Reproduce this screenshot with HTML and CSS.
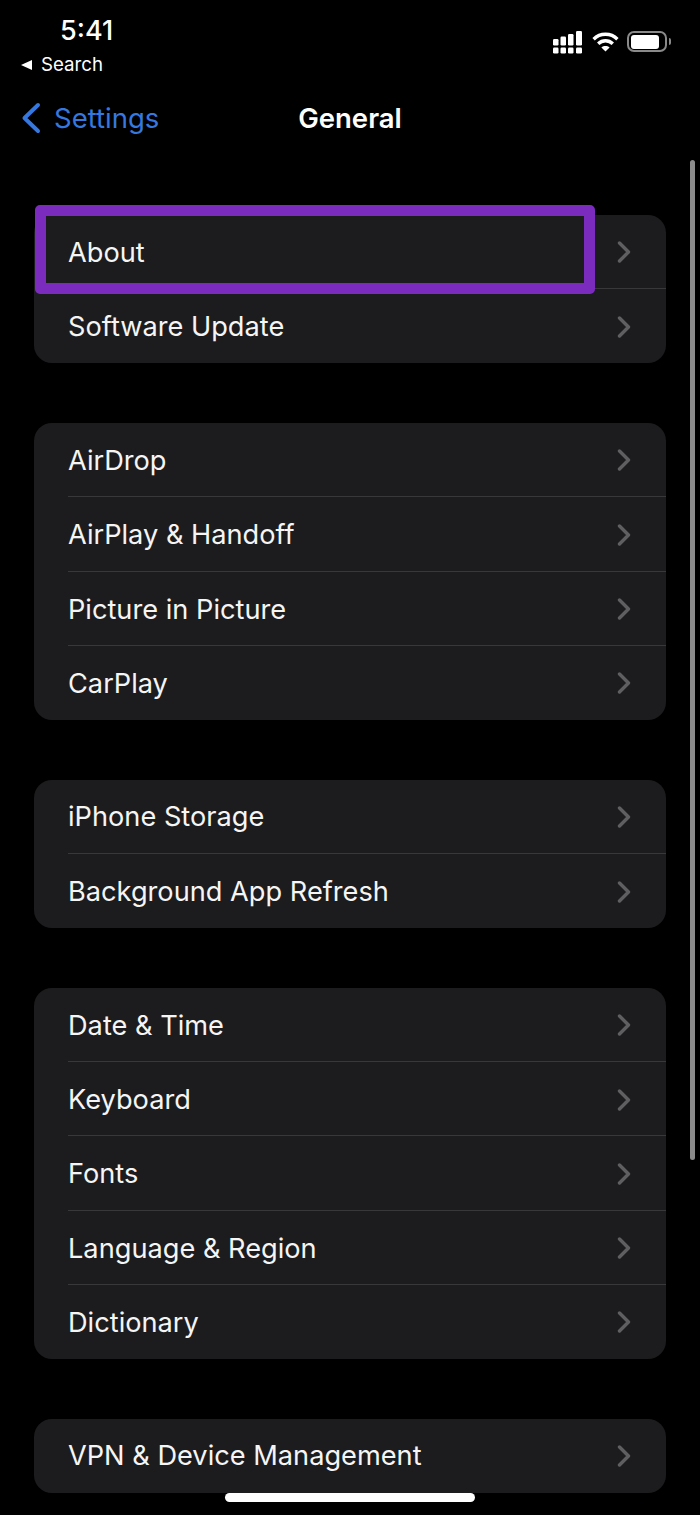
FILE: index.html
```html
<!doctype html>
<html>
<head>
    <title>General</title>
    <link rel="stylesheet" href="styles.css">
</head>

<body>
<div class="phone">
    <div class="status">
        <div class="status-left">
            <div class="time">5:41</div>
            <div class="back-app"><span class="back-tri"></span>Search</div>
        </div>
        <div class="status-icons">
            <svg class="signal" width="30" height="23" viewBox="0 0 30 23" fill="#fff">
                <rect x="0" y="8" width="5.5" height="6.5" rx="1.2"/>
                <rect x="7.5" y="5.5" width="5.5" height="9" rx="1.2"/>
                <rect x="15" y="3" width="5.5" height="11.5" rx="1.2"/>
                <rect x="23" y="0" width="6" height="14.5" rx="1.2"/>
                <rect x="0" y="16.5" width="5.5" height="6" rx="1.2"/>
                <rect x="7.5" y="16.5" width="5.5" height="6" rx="1.2"/>
                <rect x="15" y="16.5" width="5.5" height="6" rx="1.2"/>
                <rect x="23" y="16.5" width="6" height="6" rx="1.2"/>
            </svg>
            <svg class="wifi" width="27" height="20" viewBox="0 0 27 20" fill="none" stroke="#fff" stroke-width="3.4">
                <path d="M1.6 7.2C8.2 0.6 18.8 0.6 25.4 7.2"/>
                <path d="M6.2 11.8C10.4 7.8 16.6 7.8 20.8 11.8"/>
                <path d="M13.5 19.6L9.4 15.5C11.8 13.6 15.2 13.6 17.6 15.5Z" fill="#fff" stroke="none"/>
            </svg>
            <div class="battery"><div class="battery-fill"></div></div>
            <div class="battery-nub"></div>
        </div>
    </div>

    <div class="nav">
        <div class="nav-back">
            <svg width="20" height="32" viewBox="0 0 20 32" fill="none" stroke="#3478e0" stroke-width="4" stroke-linecap="round" stroke-linejoin="round">
                <path d="M17 3L3.5 16L17 29"/>
            </svg>
            <span>Settings</span>
        </div>
        <div class="nav-title">General</div>
    </div>

    <div class="list">
        <div class="group">
            <div class="row"><span>About</span><svg class="chev" width="14" height="22" viewBox="0 0 14 22"><path d="M2.5 2L11.5 11L2.5 20"/></svg></div>
            <div class="row"><span>Software Update</span><svg class="chev" width="14" height="22" viewBox="0 0 14 22"><path d="M2.5 2L11.5 11L2.5 20"/></svg></div>
        </div>
        <div class="group">
            <div class="row"><span>AirDrop</span><svg class="chev" width="14" height="22" viewBox="0 0 14 22"><path d="M2.5 2L11.5 11L2.5 20"/></svg></div>
            <div class="row"><span>AirPlay &amp; Handoff</span><svg class="chev" width="14" height="22" viewBox="0 0 14 22"><path d="M2.5 2L11.5 11L2.5 20"/></svg></div>
            <div class="row"><span>Picture in Picture</span><svg class="chev" width="14" height="22" viewBox="0 0 14 22"><path d="M2.5 2L11.5 11L2.5 20"/></svg></div>
            <div class="row"><span>CarPlay</span><svg class="chev" width="14" height="22" viewBox="0 0 14 22"><path d="M2.5 2L11.5 11L2.5 20"/></svg></div>
        </div>
        <div class="group">
            <div class="row"><span>iPhone Storage</span><svg class="chev" width="14" height="22" viewBox="0 0 14 22"><path d="M2.5 2L11.5 11L2.5 20"/></svg></div>
            <div class="row"><span>Background App Refresh</span><svg class="chev" width="14" height="22" viewBox="0 0 14 22"><path d="M2.5 2L11.5 11L2.5 20"/></svg></div>
        </div>
        <div class="group">
            <div class="row"><span>Date &amp; Time</span><svg class="chev" width="14" height="22" viewBox="0 0 14 22"><path d="M2.5 2L11.5 11L2.5 20"/></svg></div>
            <div class="row"><span>Keyboard</span><svg class="chev" width="14" height="22" viewBox="0 0 14 22"><path d="M2.5 2L11.5 11L2.5 20"/></svg></div>
            <div class="row"><span>Fonts</span><svg class="chev" width="14" height="22" viewBox="0 0 14 22"><path d="M2.5 2L11.5 11L2.5 20"/></svg></div>
            <div class="row"><span>Language &amp; Region</span><svg class="chev" width="14" height="22" viewBox="0 0 14 22"><path d="M2.5 2L11.5 11L2.5 20"/></svg></div>
            <div class="row"><span>Dictionary</span><svg class="chev" width="14" height="22" viewBox="0 0 14 22"><path d="M2.5 2L11.5 11L2.5 20"/></svg></div>
        </div>
        <div class="group">
            <div class="row"><span>VPN &amp; Device Management</span><svg class="chev" width="14" height="22" viewBox="0 0 14 22"><path d="M2.5 2L11.5 11L2.5 20"/></svg></div>
        </div>
    </div>

    <!-- overlays -->
    <div class="highlight"></div>
    <div class="scrollbar"></div>
    <div class="home-bar"></div>
</div>
</body>
</html>
```

FILE: styles.css
```css
body {
    background: #000;
    color: #fff;
    margin: 0;
    font-family: Inter, "Noto Sans", sans-serif;
}

.phone {
    position: relative;
    width: 700px;
    height: 1515px;
    overflow: hidden;
    background: #000;
}

.status {
    height: 84px;
    display: flex;
    justify-content: space-between;
    padding: 0 29px 0 21px;
}

.status-left {
    padding-top: 16px;
}

.time {
    font-size: 27px;
    font-weight: 500;
    line-height: 30px;
    margin-left: 39px;
}

.back-app {
    display: flex;
    align-items: center;
    font-size: 18.7px;
    line-height: 24px;
    margin-top: 7px;
}

.back-tri {
    width: 0;
    height: 0;
    border-style: solid;
    border-width: 5.5px 11px 5.5px 0;
    border-color: transparent #fff transparent transparent;
    margin-right: 9px;
}

.status-icons {
    display: flex;
    align-items: flex-start;
    padding-top: 31px;
}

.wifi {
    margin: 1px 0 0 9px;
}

.battery {
    width: 40px;
    height: 21px;
    margin-left: 8px;
    padding: 1.5px;
    border: 2px solid #8a8a8a;
    border-radius: 7px;
    box-sizing: border-box;
}

.battery-fill {
    width: 28px;
    height: 100%;
    background: #fff;
    border-radius: 3px;
}

.battery-nub {
    width: 2px;
    height: 7px;
    margin: 7px 0 0 2px;
    background: #8a8a8a;
    border-radius: 0 2px 2px 0;
}

.nav {
    height: 68px;
    position: relative;
    display: flex;
    align-items: center;
    justify-content: center;
}

.nav-back {
    position: absolute;
    left: 21px;
    top: 18px;
    display: flex;
    align-items: center;
    gap: 13px;
    color: #3478e0;
    font-size: 27.5px;
    line-height: 32px;
}

.nav-title {
    font-size: 27.5px;
    font-weight: 600;
    line-height: 32px;
}

.list {
    padding: 63px 34px 0;
    display: flex;
    flex-direction: column;
    gap: 60px;
}

.group {
    background: #1c1c1e;
    border-radius: 18px;
    overflow: hidden;
}

.row {
    height: 74.15px;
    box-sizing: border-box;
    margin-left: 34px;
    padding-right: 35px;
    display: flex;
    align-items: center;
    justify-content: space-between;
    font-size: 27.2px;
    color: #f5f5f5;
}

.row + .row {
    padding-top: 1px;
    box-shadow: 0 -1px 0 #38383a;
}

.chev {
    fill: none;
    stroke: #5f5f62;
    stroke-width: 3.4;
    stroke-linecap: round;
    stroke-linejoin: round;
}

.highlight {
    position: absolute;
    left: 35px;
    top: 205px;
    width: 560px;
    height: 89px;
    box-sizing: border-box;
    border: 11px solid #7b2cbf;
    border-radius: 5px;
}

.scrollbar {
    position: absolute;
    left: 690px;
    top: 160px;
    width: 5px;
    height: 1000px;
    background: #8c8c8c;
    border-radius: 3px;
}

.home-bar {
    position: absolute;
    left: 225px;
    top: 1493px;
    width: 250px;
    height: 9px;
    background: #fff;
    border-radius: 5px;
}
```
